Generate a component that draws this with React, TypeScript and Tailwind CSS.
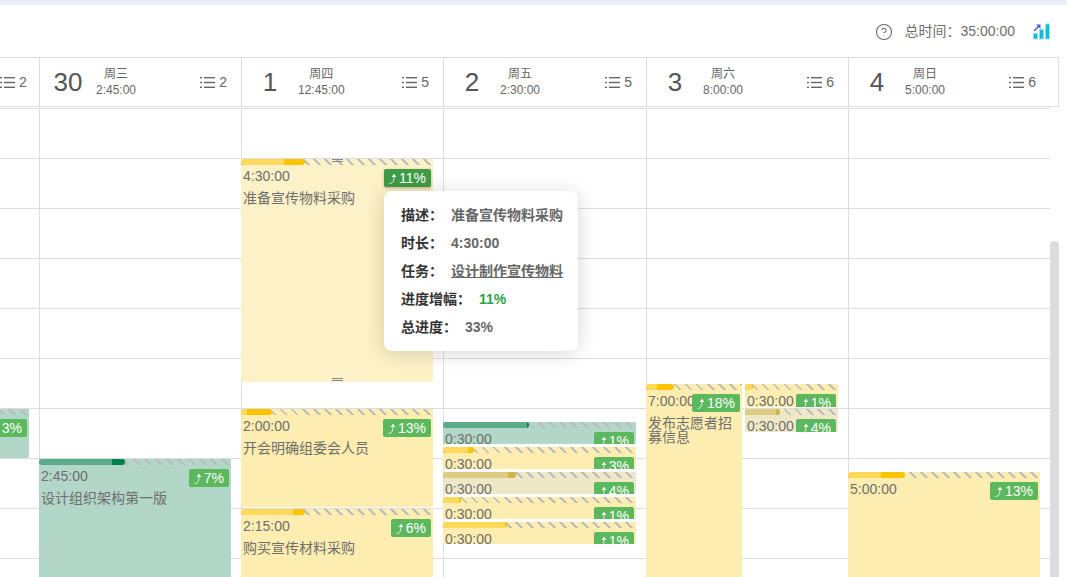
import { CircleHelp } from "lucide-react";

type Kind = "green" | "yellow" | "khaki" | "active";

type CalEvent = {
  left: number;
  top: number;
  width: number;
  height: number;
  kind: Kind;
  bar: number;
  dark: number;
  time: string;
  title?: string;
  pct: string;
};

const kinds = {
  green: { bg: "bg-[#b2d6c7]", light: "bg-[#5aaa8b]", dark: "bg-[#03804f]", badge: "bg-[#5cb85c]" },
  yellow: { bg: "bg-[#feedb0]", light: "bg-[#ffd95a]", dark: "bg-[#ffc400]", badge: "bg-[#5cb85c]" },
  khaki: { bg: "bg-[#efe8c6]", light: "bg-[#decd80]", dark: "bg-[#cfb343]", badge: "bg-[#5cb85c]" },
  active: { bg: "bg-[#fdf1c8]", light: "bg-[#ffd95a]", dark: "bg-[#ffc400]", badge: "bg-[#3f9c46] font-medium shadow-[0_1px_3px_rgba(0,0,0,0.25)]" },
};

const headers = [
  { w: "w-[40px]", count: "2", partial: true },
  { w: "w-[202px]", date: "30", week: "周三", time: "2:45:00", count: "2" },
  { w: "w-[202px]", date: "1", week: "周四", time: "12:45:00", count: "5" },
  { w: "w-[203px]", date: "2", week: "周五", time: "2:30:00", count: "5" },
  { w: "w-[202px]", date: "3", week: "周六", time: "8:00:00", count: "6" },
  { w: "w-[210px]", date: "4", week: "周日", time: "5:00:00", count: "6", last: true },
];

const columns: { w: string; events: CalEvent[] }[] = [
  {
    w: "w-[40px] border-r",
    events: [{ left: -163, top: 300, width: 192, height: 49, kind: "green", bar: 0, dark: 0, time: "", pct: "3%" }],
  },
  {
    w: "w-[202px] border-r",
    events: [
      { left: -1, top: 350, width: 192, height: 240, kind: "green", bar: 86, dark: 13, time: "2:45:00", title: "设计组织架构第一版", pct: "7%" },
    ],
  },
  {
    w: "w-[202px] border-r",
    events: [
      { left: -1, top: 50, width: 192, height: 223, kind: "active", bar: 64, dark: 21, time: "4:30:00", title: "准备宣传物料采购", pct: "11%" },
      { left: -1, top: 300, width: 192, height: 98, kind: "yellow", bar: 31, dark: 25, time: "2:00:00", title: "开会明确组委会人员", pct: "13%" },
      { left: -1, top: 400, width: 192, height: 100, kind: "yellow", bar: 64, dark: 12, time: "2:15:00", title: "购买宣传材料采购", pct: "6%" },
    ],
  },
  {
    w: "w-[203px] border-r",
    events: [
      { left: -1, top: 313, width: 193, height: 22, kind: "green", bar: 86, dark: 2, time: "0:30:00", pct: "1%" },
      { left: -1, top: 338, width: 193, height: 22, kind: "yellow", bar: 31, dark: 6, time: "0:30:00", pct: "3%" },
      { left: -1, top: 363, width: 193, height: 22, kind: "khaki", bar: 73, dark: 8, time: "0:30:00", pct: "4%" },
      { left: -1, top: 388, width: 193, height: 22, kind: "yellow", bar: 18, dark: 2, time: "0:30:00", pct: "1%" },
      { left: -1, top: 413, width: 193, height: 22, kind: "yellow", bar: 64, dark: 2, time: "0:30:00", pct: "1%" },
    ],
  },
  {
    w: "w-[202px] border-r",
    events: [
      { left: -1, top: 275, width: 96, height: 240, kind: "yellow", bar: 28, dark: 17, time: "7:00:00", title: "发布志愿者招募信息", pct: "18%" },
      { left: 98, top: 275, width: 93, height: 23, kind: "yellow", bar: 8, dark: 1, time: "0:30:00", pct: "1%" },
      { left: 98, top: 300, width: 93, height: 23, kind: "khaki", bar: 35, dark: 4, time: "0:30:00", pct: "4%" },
    ],
  },
  {
    w: "w-[201px]",
    events: [{ left: -1, top: 363, width: 192, height: 240, kind: "yellow", bar: 57, dark: 24, time: "5:00:00", pct: "13%" }],
  },
];

const rows = [0, 1, 2, 3, 4, 5, 6, 7, 8, 9];

const ListIcon = () => (
  <svg width="15" height="13" viewBox="0 0 15 13" className="shrink-0 text-[#666]" fill="currentColor">
    <rect x="0" y="1" width="2" height="1.4" />
    <rect x="4" y="1" width="11" height="1.4" />
    <rect x="0" y="5.8" width="2" height="1.4" />
    <rect x="4" y="5.8" width="11" height="1.4" />
    <rect x="0" y="10.6" width="2" height="1.4" />
    <rect x="4" y="10.6" width="11" height="1.4" />
  </svg>
);

const ChartIcon = () => (
  <svg width="17" height="17" viewBox="0 0 17 17" className="shrink-0">
    <rect x="0.5" y="10.5" width="4" height="5.5" fill="#14bdd6" stroke="#8fe3ee" strokeWidth="0.8" />
    <rect x="6.5" y="6.5" width="4" height="9.5" fill="#14bdd6" stroke="#8fe3ee" strokeWidth="0.8" />
    <rect x="12.5" y="1" width="4" height="15" fill="#14bdd6" stroke="#8fe3ee" strokeWidth="0.8" />
    <path d="M1 8 L6 3" stroke="#4a5cc4" strokeWidth="1.5" fill="none" />
    <path d="M3 1.5 H7.5 V6 Z" fill="#4a5cc4" />
  </svg>
);

const UpArrow = () => (
  <svg width="9" height="13" viewBox="0 0 9 13" className="mr-px shrink-0" fill="none">
    <path d="M0.5 11.5 C3.5 11.5 5 9.5 5 4" stroke="white" strokeWidth="1" opacity="0.85" />
    <path d="M2.6 5 L5 1.8 L7.4 5 Z" fill="white" />
  </svg>
);

const Event = ({ e }: { e: CalEvent }) => {
  const k = kinds[e.kind];
  return (
    <div
      className={`absolute overflow-hidden rounded-b-[2px] ${k.bg}`}
      style={{ left: e.left, top: e.top, width: e.width, height: e.height }}
    >
      <div className="h-[6px] bg-[repeating-linear-gradient(45deg,#bcbcbc_0,#bcbcbc_2px,transparent_2px,transparent_7.8px)]">
        {e.bar > 0 && (
          <div className="flex h-full overflow-hidden rounded-[3px]" style={{ width: e.bar }}>
            <div className={`flex-1 ${k.light}`} />
            <div className={k.dark} style={{ width: e.dark }} />
          </div>
        )}
      </div>
      <div className="mt-[4px] whitespace-nowrap pl-[2px] text-[14px] leading-[14px] text-[#6e6e6e]">{e.time}</div>
      {e.title && <div className="mt-[8px] pl-[2px] text-[14px] leading-[14px] text-[#6e6e6e]">{e.title}</div>}
      <div
        className={`absolute right-[2px] top-[10px] flex h-[18px] items-center rounded-[2px] px-[5px] text-[14px] leading-none text-white ${k.badge}`}
      >
        <UpArrow />
        {e.pct}
      </div>
      {e.kind === "active" && (
        <>
          <div className="absolute left-[91px] top-0 h-[3px] w-[11px] border-y border-[#888]" />
          <div className="absolute bottom-[1px] left-[91px] h-[3px] w-[11px] border-y border-[#888]" />
        </>
      )}
    </div>
  );
};

const Tip = ({ label, children }: { label: string; children: React.ReactNode }) => (
  <div className="flex h-[28px] items-center whitespace-nowrap">
    <span className="mr-[8px] shrink-0 text-[#333]">{label}</span>
    {children}
  </div>
);

export default function App() {
  return (
    <div className="relative h-[577px] w-[1067px] overflow-hidden bg-white font-['Liberation_Sans','Noto_Sans_CJK_SC',sans-serif] text-[14px]">
      <div className="h-[5px] bg-[#e9edf6]" />

      <div className="flex h-[52px] items-center justify-end pr-[17px] pt-[1px] text-[#6e6e6e]">
        <CircleHelp size={18} strokeWidth={1.4} className="mr-[12px] text-[#666]" />
        <span className="mr-[18px]">总时间：35:00:00</span>
        <ChartIcon />
      </div>

      <div className="flex h-[50px] w-[1059px] border-y border-[#ddd]">
        {headers.map((h, i) => (
          <div key={i} className={`flex ${h.w} shrink-0 items-center border-r border-[#ddd] ${h.last ? "pr-[22px]" : "pr-[14px]"}`}>
            {!h.partial && (
              <>
                <div className="w-[56px] shrink-0 text-center text-[26px] leading-none text-[#555]">{h.date}</div>
                <div className="text-center text-[12px] leading-[16px] text-[#666]">
                  <div>{h.week}</div>
                  <div>{h.time}</div>
                </div>
              </>
            )}
            <div className="ml-auto flex items-center gap-[4px] text-[#666]">
              <ListIcon />
              {h.count}
            </div>
          </div>
        ))}
      </div>

      <div className="mt-[1px] flex h-[469px] w-[1059px]">
        <div className="flex w-[1050px] border-t border-[#ddd]">
          {columns.map((c, i) => (
            <div key={i} className={`relative shrink-0 border-[#ddd] ${c.w}`}>
              {rows.map((r) => (
                <div key={r} className="h-[50px] border-b border-[#ddd]" />
              ))}
              {c.events.map((e) => (
                <Event key={e.top + "-" + e.left} e={e} />
              ))}
            </div>
          ))}
        </div>
        <div className="w-[9px] pt-[133px]">
          <div className="h-full rounded-t-[4px] bg-[#dcdcdc]" />
        </div>
      </div>

      <div className="absolute left-[384px] top-[191px] w-[194px] rounded-[8px] bg-white px-[17px] py-[10px] font-bold text-[#666] shadow-[0_2px_20px_rgba(0,0,0,0.16)]">
        <Tip label="描述：">准备宣传物料采购</Tip>
        <Tip label="时长：">4:30:00</Tip>
        <Tip label="任务：">
          <span className="underline">设计制作宣传物料</span>
        </Tip>
        <Tip label="进度增幅：">
          <span className="text-[#28a745]">11%</span>
        </Tip>
        <Tip label="总进度：">33%</Tip>
      </div>
    </div>
  );
}
